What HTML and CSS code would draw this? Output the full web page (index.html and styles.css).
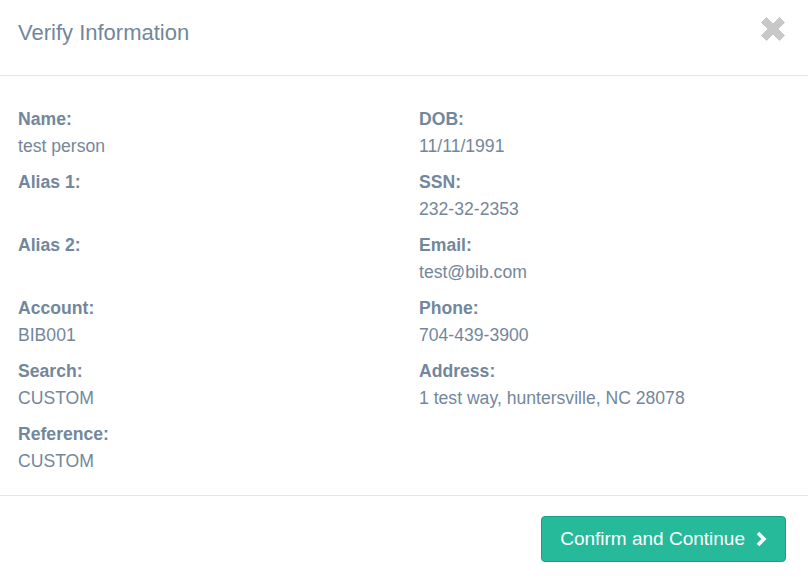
FILE: index.html
```html
<!DOCTYPE html>
<html>
<head>
<meta charset="utf-8">
<link rel="stylesheet" href="styles.css">
</head>
<body>
<div class="modal">
  <div class="modal-header">
    <h4 class="modal-title">Verify Information</h4>
    <button class="close" aria-label="Close">
      <svg width="26" height="26" viewBox="0 0 26 26"><path d="M1.5 6.5 L6.5 1.5 L13 8 L19.5 1.5 L24.5 6.5 L18 13 L24.5 19.5 L19.5 24.5 L13 18 L6.5 24.5 L1.5 19.5 L8 13 Z" fill="#c8c8c8" stroke="#c8c8c8" stroke-width="1" stroke-linejoin="round"/></svg>
    </button>
  </div>
  <div class="modal-body">
    <div class="col">
      <div class="field"><div class="label">Name:</div><div class="value">test person</div></div>
      <div class="field"><div class="label">Alias 1:</div><div class="value"></div></div>
      <div class="field"><div class="label">Alias 2:</div><div class="value"></div></div>
      <div class="field"><div class="label">Account:</div><div class="value">BIB001</div></div>
      <div class="field"><div class="label">Search:</div><div class="value">CUSTOM</div></div>
      <div class="field"><div class="label">Reference:</div><div class="value">CUSTOM</div></div>
    </div>
    <div class="col">
      <div class="field"><div class="label">DOB:</div><div class="value">11/11/1991</div></div>
      <div class="field"><div class="label">SSN:</div><div class="value">232-32-2353</div></div>
      <div class="field"><div class="label">Email:</div><div class="value">test@bib.com</div></div>
      <div class="field"><div class="label">Phone:</div><div class="value">704-439-3900</div></div>
      <div class="field"><div class="label">Address:</div><div class="value">1 test way, huntersville, NC 28078</div></div>
    </div>
  </div>
  <div class="modal-footer">
    <button class="btn-success">Confirm and Continue
      <svg class="chev" width="13" height="16" viewBox="0 0 13 16"><path d="M3 2 L9 8 L3 14" fill="none" stroke="#fff" stroke-width="3.6"/></svg>
    </button>
  </div>
</div>
</body>
</html>
```
FILE: styles.css
```css
* { box-sizing: border-box; }
html, body { margin: 0; padding: 0; background: #fff; }
body {
  font-family: "Liberation Sans", Arial, sans-serif;
  color: #73879c;
  font-size: 17.6px;
}
.modal { width: 808px; }
.modal-header {
  height: 76px;
  border-bottom: 1px solid #e5e5e5;
  display: flex;
  justify-content: space-between;
  align-items: flex-start;
  padding: 0 22px 0 18px;
}
.modal-title {
  margin: 0;
  padding-top: 21px;
  font-size: 22px;
  font-weight: normal;
  line-height: 24px;
  color: #73879c;
}
.close {
  border: 0;
  background: none;
  padding: 0;
  margin-top: 16px;
  width: 26px;
  height: 26px;
  cursor: pointer;
}
.close svg { display: block; }
.modal-body {
  display: flex;
  padding: 33px 18px 8px 18px;
  border-bottom: 1px solid #e5e5e5;
}
.col { width: 401px; flex-shrink: 0; }
.col + .col { width: auto; flex: 1; }
.field { margin-bottom: 16px; min-height: 47px; }
.label {
  font-weight: bold;
  line-height: 20px;
  margin-bottom: 7px;
}
.value { line-height: 20px; min-height: 20px; }
.modal-footer {
  display: flex;
  justify-content: flex-end;
  padding: 20px 22px 23px;
}
.btn-success {
  background: #26b99a;
  border: 1px solid #169f85;
  border-radius: 4px;
  color: #fff;
  font-family: "Liberation Sans", Arial, sans-serif;
  font-size: 19px;
  height: 46px;
  padding: 0 17px 0 18px;
  display: flex;
  align-items: center;
  gap: 10px;
  cursor: pointer;
}
.chev { display: block; }
```
